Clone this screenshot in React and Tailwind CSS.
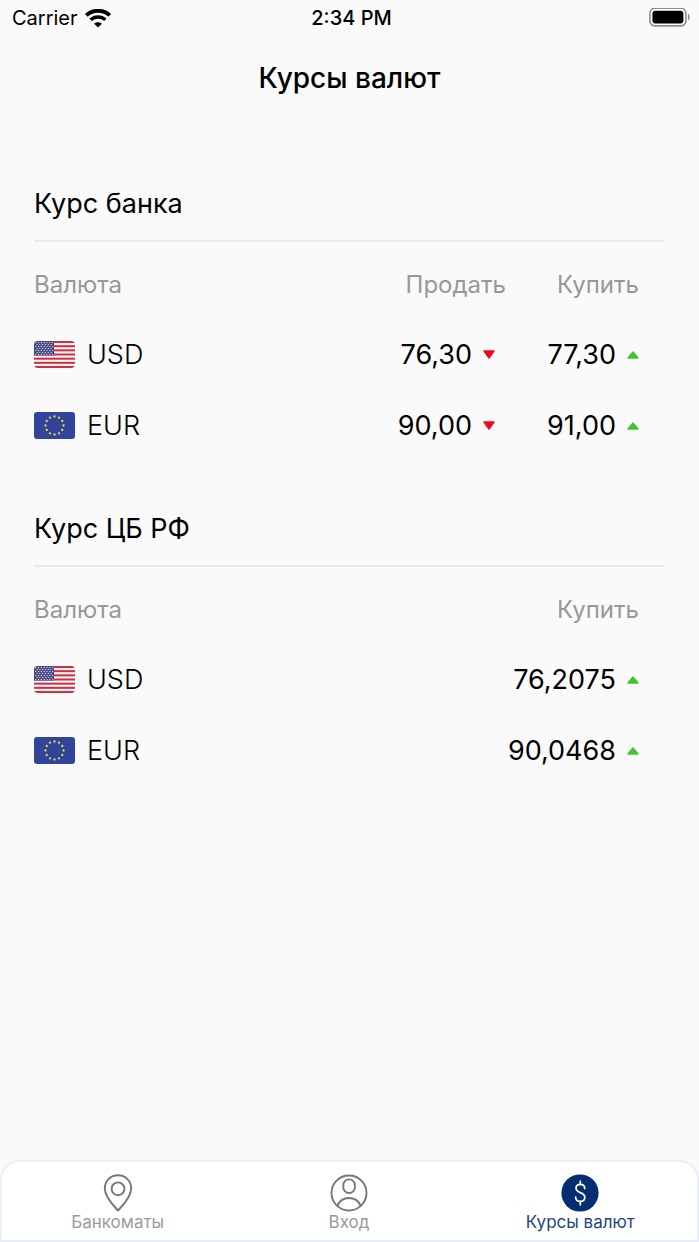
import React from "react";

const STRIPES = [0, 2, 4, 6, 8, 10, 12];

function UsdFlag() {
  const dots = [];
  for (let r = 0; r < 7; r++) {
    for (let c = 0; c < 7; c++) {
      dots.push([1.8 + c * 2.8 + (r % 2 ? 1.3 : 0), 1.5 + r * 2]);
    }
  }
  return (
    <svg className="block h-[27px] w-[41px] shrink-0 rounded-[4px]" viewBox="0 0 41 27" aria-hidden="true">
      <rect width="41" height="27" fill="#fff" />
      {STRIPES.map((i) => (
        <rect key={i} y={(i * 27) / 13} width="41" height={27 / 13} fill="#d02f44" />
      ))}
      <rect width="20" height="14.54" fill="#46467f" />
      {dots
        .filter(([x]) => x < 19.5)
        .map(([x, y]) => (
          <circle key={`${x}-${y}`} cx={x} cy={y} r="0.65" fill="#d5d5e6" />
        ))}
    </svg>
  );
}

function EurFlag() {
  return (
    <svg className="block h-[27px] w-[41px] shrink-0 rounded-[3px]" viewBox="0 0 41 27" aria-hidden="true">
      <rect width="41" height="27" fill="#31439b" />
      {Array.from({ length: 12 }, (_, i) => {
        const a = (i * Math.PI) / 6;
        return <circle key={i} cx={20.5 + 9 * Math.sin(a)} cy={13.5 - 9 * Math.cos(a)} r="1.15" fill="#e6dc3c" />;
      })}
    </svg>
  );
}

function Trend({ up }) {
  return up ? (
    <svg className="block h-2 w-3 shrink-0" viewBox="0 0 12 8" role="img" aria-label="рост">
      <path d="M6 1 L11 7 H1 Z" fill="#3dc62c" stroke="#3dc62c" strokeWidth="1.4" strokeLinejoin="round" />
    </svg>
  ) : (
    <svg className="block h-[9px] w-3 shrink-0" viewBox="0 0 12 9" role="img" aria-label="падение">
      <path d="M1 1 H11 L6 8 Z" fill="#f00a1e" stroke="#f00a1e" strokeWidth="1.4" strokeLinejoin="round" />
    </svg>
  );
}

function Rate({ value, up }) {
  return (
    <div className="flex items-center justify-end gap-[11px]">
      <span>{value}</span>
      <Trend up={up} />
    </div>
  );
}

function RateSection({ title, rows, withSell }) {
  return (
    <section>
      <h2 className="border-b-2 border-[#ebebeb] pb-[18px] text-[27px] leading-9">{title}</h2>
      <table className="w-full border-collapse">
        <thead>
          <tr className="h-[77px] text-2xl leading-8 text-[#989898]">
            <th scope="col" className="pt-2 text-left font-normal">Валюта</th>
            {withSell && <th scope="col" className="w-40 pt-2 text-right font-normal">Продать</th>}
            <th scope="col" className="w-[159px] pt-2 pr-[26px] text-right font-normal">Купить</th>
          </tr>
        </thead>
        <tbody>
          {rows.map((r) => (
            <tr key={r.code} className="h-[71px] text-[27px] leading-9">
              <th scope="row" className="text-left font-light">
                <div className="flex items-center gap-3">
                  {r.code === "USD" ? <UsdFlag /> : <EurFlag />}
                  <span>{r.code}</span>
                </div>
              </th>
              {withSell && (
                <td className="pr-[11px]">
                  <Rate value={r.sell} up={false} />
                </td>
              )}
              <td className="pr-[26px]">
                <Rate value={r.buy} up />
              </td>
            </tr>
          ))}
        </tbody>
      </table>
    </section>
  );
}

function PinIcon() {
  return (
    <svg className="block size-[38px]" viewBox="0 0 38 38" fill="none" stroke="#767676" strokeWidth="1.9" strokeLinejoin="round" aria-hidden="true">
      <path d="M19 36.6 C16 33 5.8 23.5 5.8 14.4 C5.8 7 11.5 1.3 19 1.3 C26.5 1.3 32.2 7 32.2 14.4 C32.2 23.5 22 33 19 36.6 Z" />
      <circle cx="19" cy="14.8" r="6.4" />
    </svg>
  );
}

function UserIcon() {
  return (
    <svg className="block size-[38px]" viewBox="0 0 38 38" fill="none" stroke="#767676" strokeWidth="1.9" aria-hidden="true">
      <circle cx="19" cy="19" r="17.5" />
      <rect x="13.3" y="5.4" width="11.6" height="13.6" rx="5.7" />
      <path d="M7.4 31.8 C9.5 26.8 13.8 24 19 24 C24.2 24 28.5 26.8 30.6 31.8" />
    </svg>
  );
}

function DollarIcon() {
  return (
    <svg className="block size-[38px]" viewBox="0 0 38 38" fill="none" aria-hidden="true">
      <circle cx="19" cy="19" r="18.6" fill="#032f72" />
      <g stroke="#fff" strokeWidth="1.7" strokeLinecap="round">
        <path d="M19.3 7.2 V10.4 M19.3 27.4 V30.8" />
        <path d="M23.7 14.4 C23.7 12 21.8 10.4 19.3 10.4 C16.8 10.4 15 12 15 14.3 C15 19.4 23.8 17.8 23.8 23.2 C23.8 25.8 21.8 27.4 19.3 27.4 C16.6 27.4 14.7 25.8 14.6 23.2" />
      </g>
    </svg>
  );
}

const TABS = [
  { label: "Банкоматы", Icon: PinIcon },
  { label: "Вход", Icon: UserIcon },
  { label: "Курсы валют", Icon: DollarIcon, active: true },
];

export default function App() {
  return (
    <div className="flex min-h-screen flex-col bg-[#fafafa] font-['Inter','Noto_Sans',sans-serif] text-black">
      <div className="grid h-9 grid-cols-3 items-center pr-2 pl-3 text-xl leading-6">
        <div className="flex items-center gap-[7px]">
          <span>Carrier</span>
          <svg className="block h-[19px] w-[26px]" viewBox="0 0 26 19" fill="none" stroke="#000" aria-hidden="true">
            <path d="M1.3 6.4 C7.8 0.2 18.2 0.2 24.7 6.4" strokeWidth="3.8" />
            <path d="M5.6 10.8 C9.8 6.9 16.2 6.9 20.4 10.8" strokeWidth="3.5" />
            <path d="M13 18.4 L9.2 14.8 C11.2 12.8 14.8 12.8 16.8 14.8 Z" fill="#000" stroke="none" />
          </svg>
        </div>
        <div className="text-center font-medium">2:34 PM</div>
        <svg className="block h-5 w-[42px] justify-self-end" viewBox="0 0 42 20" aria-hidden="true">
          <rect x="0.9" y="0.3" width="36" height="17.6" rx="5" fill="#fff" stroke="#8c8c8c" strokeWidth="1.6" />
          <rect x="3.4" y="2.8" width="31" height="12.6" rx="3" fill="#000" />
          <path d="M39 5.8 C41.2 6.8 41.2 11.6 39 12.6 Z" fill="#8c8c8c" />
        </svg>
      </div>

      <h1 className="pt-6 text-center text-[28px] leading-9 font-medium">Курсы валют</h1>

      <main className="flex flex-col gap-[50px] px-[34px] pt-[90px] pb-12">
        <RateSection
          title="Курс банка"
          withSell
          rows={[
            { code: "USD", sell: "76,30", buy: "77,30" },
            { code: "EUR", sell: "90,00", buy: "91,00" },
          ]}
        />
        <RateSection
          title="Курс ЦБ РФ"
          rows={[
            { code: "USD", buy: "76,2075" },
            { code: "EUR", buy: "90,0468" },
          ]}
        />
      </main>

      <nav className="mt-auto grid grid-cols-3 rounded-t-[20px] border-2 border-[#e9effa] bg-white pt-3 pr-px pb-2">
        {TABS.map(({ label, Icon, active }) => (
          <a
            key={label}
            href="#"
            aria-current={active ? "page" : undefined}
            className={
              active
                ? "flex flex-col items-center text-[17px] leading-5 text-[#1d4480]"
                : "flex flex-col items-center text-[17px] leading-5 text-[#9a9a9a]"
            }
          >
            <Icon />
            <span>{label}</span>
          </a>
        ))}
      </nav>
    </div>
  );
}
